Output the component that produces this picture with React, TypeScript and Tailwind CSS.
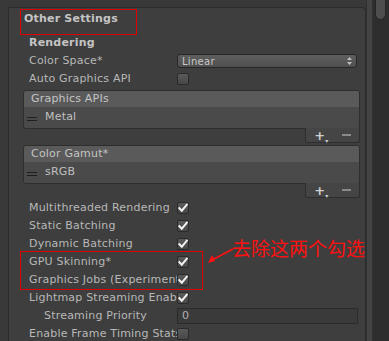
import React from "react";

const font = { fontFamily: '"DejaVu Sans", Verdana, sans-serif' };

function Check({ on }: { on: boolean }) {
  return (
    <div className="w-[12px] h-[12px] rounded-[2px] border border-[#2a2a2a] bg-gradient-to-b from-[#5a5a5a] to-[#474747] flex items-center justify-center">
      {on && (
        <svg width="11" height="10" viewBox="0 0 11 10">
          <path d="M1.5 5.2 L4.2 8 L9.8 1.2" fill="none" stroke="#f2f2f2" strokeWidth="2.2" strokeLinecap="square" />
        </svg>
      )}
    </div>
  );
}

function Row({ label, children, indent }: { label: string; children?: React.ReactNode; indent?: boolean }) {
  return (
    <div className="h-[18px] flex items-center">
      <div className={`w-[148px] shrink-0 overflow-hidden whitespace-nowrap text-[11px] tracking-[0.2px] text-[#b8b8b8] ${indent ? "pl-[15px]" : ""}`}>
        {label}
      </div>
      {children}
    </div>
  );
}

function ListBox({ title, item }: { title: string; item: string }) {
  return (
    <div className="ml-[1px] mr-[1px]">
      <div className="rounded-[3px] border border-[#2e2e2e] overflow-hidden">
        <div className="h-[16px] bg-[#5a5a5a] flex items-center pl-[7px] text-[11px] tracking-[0.2px] text-[#c4c4c4]">{title}</div>
        <div className="h-[21px] bg-[#4a4a4a] flex items-center pl-[3px] text-[11px] tracking-[0.2px] text-[#c0c0c0]">
          <div className="w-[10px] flex flex-col gap-[2px] mr-[8px] mt-[2px]">
            <div className="h-[1px] bg-[#1e1e1e]" />
            <div className="h-[1px] bg-[#1e1e1e]" />
          </div>
          {item}
        </div>
      </div>
      <div className="flex justify-end">
        <div className="w-[55px] h-[15px] -mt-[1px] bg-[#454545] border border-t-0 border-[#2e2e2e] rounded-b-[3px] flex items-center justify-around text-[#cfcfcf]">
          <span className="relative text-[13px] font-bold leading-none">
            +
            <span className="absolute -right-[3px] bottom-[-2px] text-[6px]">▾</span>
          </span>
          <span className="w-[9px] h-[2px] bg-[#8a8a8a]" />
        </div>
      </div>
    </div>
  );
}

export default function App() {
  return (
    <div className="relative w-[389px] h-[341px] overflow-hidden bg-[#393939] flex" style={font}>
      <div className="flex-1 pl-[8px] pt-[7px]">
        <div className="h-full border-l border-t border-r border-[#2c2c2c] rounded-tr-[4px] rounded-tl-[2px] bg-[#3e3e3e] pl-[13px] pr-[4px] pt-[2px]">
          <div className="h-[18px] flex items-center pl-[2px] text-[11px] font-bold tracking-[0.2px] text-[#c4c4c4]">Other Settings</div>
          <div className="h-[18px] mt-[6px] flex items-center pl-[7px] text-[11px] font-bold tracking-[0.2px] text-[#c4c4c4]">Rendering</div>
          <div className="pl-[7px]">
            <Row label="Color Space*">
              <div className="w-[180px] h-[14px] rounded-[3px] border border-[#262626] bg-gradient-to-b from-[#5e5e5e] to-[#4f4f4f] flex items-center justify-between pl-[4px] pr-[4px] text-[10px] tracking-[0.3px] text-[#c8c8c8]">
                <span>Linear</span>
                <svg width="5" height="8" viewBox="0 0 5 8">
                  <path d="M0 3 L2.5 0 L5 3 Z M0 5 L2.5 8 L5 5 Z" fill="#c0c0c0" />
                </svg>
              </div>
            </Row>
            <Row label="Auto Graphics API">
              <Check on={false} />
            </Row>
          </div>
          <div className="mt-[2px]">
            <ListBox title="Graphics APIs" item="Metal" />
            <div className="h-[2px]" />
            <ListBox title="Color Gamut*" item="sRGB" />
          </div>
          <div className="pl-[7px] mt-[1px]">
            <Row label="Multithreaded Rendering"><Check on /></Row>
            <Row label="Static Batching"><Check on /></Row>
            <Row label="Dynamic Batching"><Check on /></Row>
            <Row label="GPU Skinning*"><Check on /></Row>
            <Row label="Graphics Jobs (Experimental)"><Check on /></Row>
            <Row label="Lightmap Streaming Enabled"><Check on /></Row>
            <Row label="Streaming Priority" indent>
              <div className="w-[181px] h-[16px] border border-[#2a2a2a] bg-[#3a3a3a] flex items-center pl-[4px] text-[11px] text-[#b0b0b0]">0</div>
            </Row>
            <Row label="Enable Frame Timing Stats"><Check on={false} /></Row>
          </div>
        </div>
      </div>
      <div className="w-[7px] h-full bg-[#444444] border-x border-[#303030]" />
      <div className="w-[16px] h-full bg-[#2e2e2e] pl-[2px] pr-[3px]">
        <div className="h-[20px] rounded-b-full bg-[#4e4e4e] border border-[#262626] border-t-0" />
      </div>

      <div className="absolute left-[20px] top-[9px] w-[117px] h-[26px] border border-[#e00000]" />
      <div className="absolute left-[20px] top-[251px] w-[183px] h-[39px] border border-[#e00000]" />
      <svg className="absolute left-0 top-0" width="389" height="341">
        <line x1="233" y1="249" x2="212" y2="260" stroke="#ff1010" strokeWidth="1.5" />
        <path d="M208 263 L212 255 L215 261 Z" fill="#ff1010" />
      </svg>
      <div
        className="absolute left-[232px] top-[236px] text-[19px] leading-[24px] text-[#ff1010] whitespace-nowrap"
        style={{ fontFamily: '"Noto Sans CJK SC", sans-serif' }}
      >
        去除这两个勾选
      </div>
    </div>
  );
}
